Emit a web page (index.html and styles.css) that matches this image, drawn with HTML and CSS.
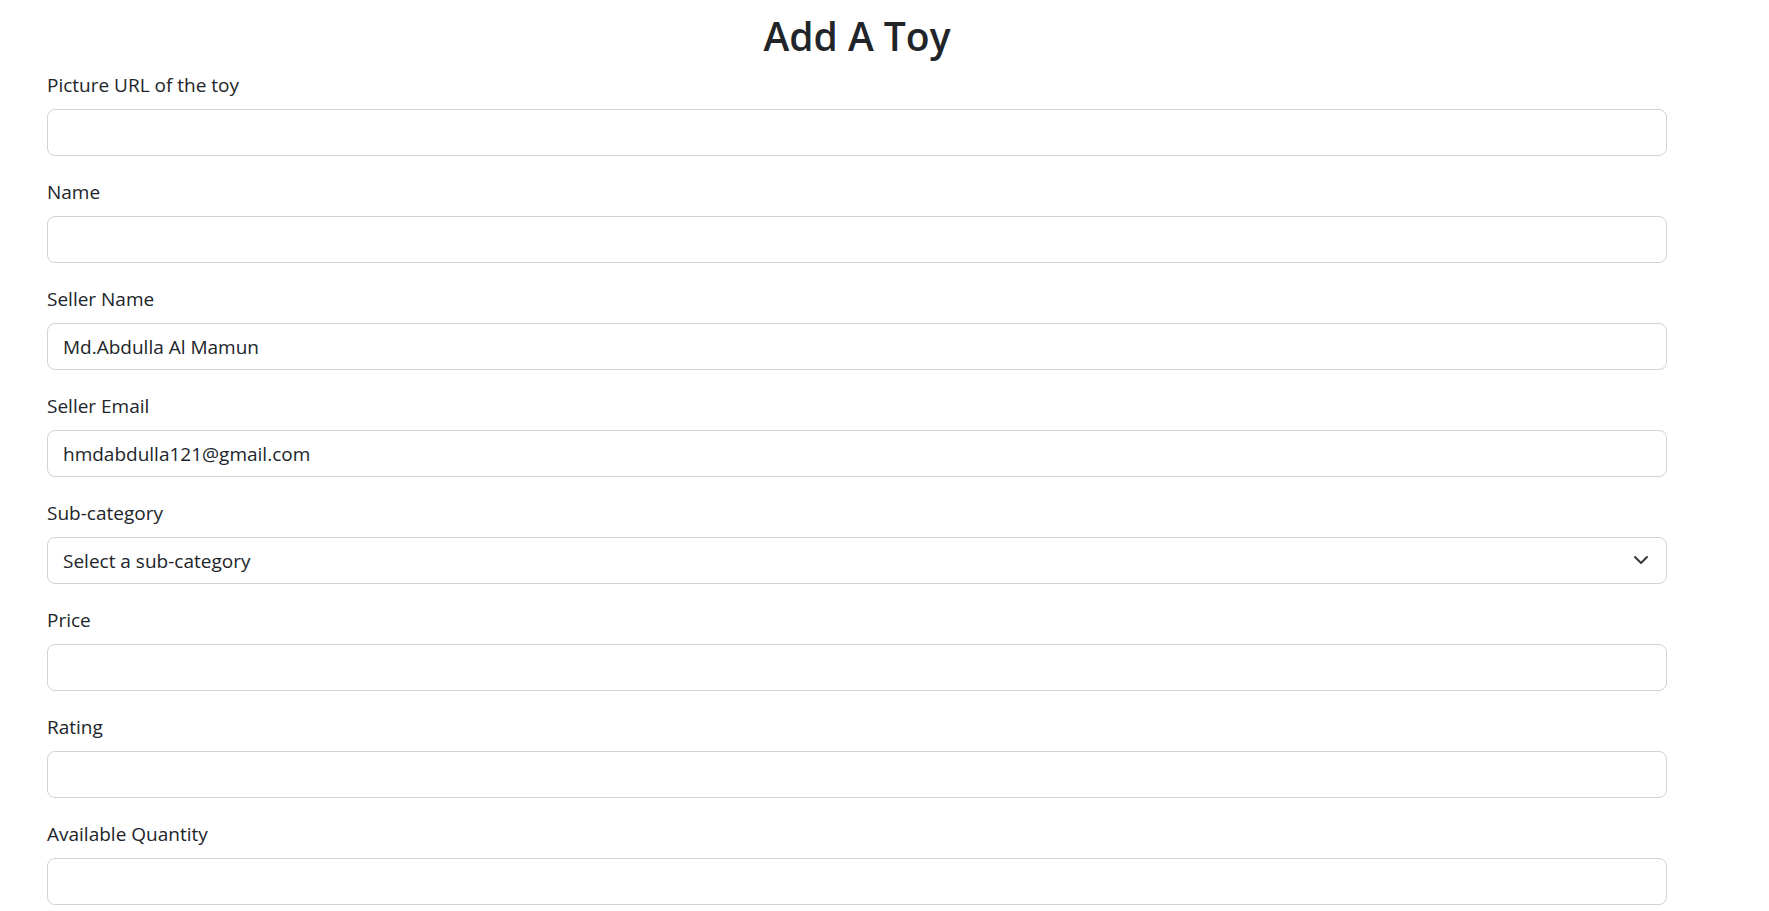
FILE: index.html
```html
<!DOCTYPE html>
<html lang="en">
<head>
  <meta charset="utf-8">
  <meta name="viewport" content="width=device-width, initial-scale=1">
  <title>Add A Toy</title>
  <link rel="stylesheet" href="styles.css">
</head>
<body>
  <main class="page">
    <h1 class="page-title">Add A Toy</h1>
    <form class="toy-form">
      <div class="field">
        <label class="field-label" for="picture">Picture URL of the toy</label>
        <input class="field-control" id="picture" type="text">
      </div>
      <div class="field">
        <label class="field-label" for="name">Name</label>
        <input class="field-control" id="name" type="text">
      </div>
      <div class="field">
        <label class="field-label" for="seller-name">Seller Name</label>
        <input class="field-control" id="seller-name" type="text" value="Md.Abdulla Al Mamun">
      </div>
      <div class="field">
        <label class="field-label" for="seller-email">Seller Email</label>
        <input class="field-control" id="seller-email" type="email" value="hmdabdulla121@gmail.com">
      </div>
      <div class="field">
        <label class="field-label" for="category">Sub-category</label>
        <div class="select-wrap">
          <select class="field-control field-select" id="category">
            <option>Select a sub-category</option>
          </select>
          <svg class="select-arrow" viewBox="0 0 16 16" aria-hidden="true"><path d="m2 5 6 6 6-6"/></svg>
        </div>
      </div>
      <div class="field">
        <label class="field-label" for="price">Price</label>
        <input class="field-control" id="price" type="text">
      </div>
      <div class="field">
        <label class="field-label" for="rating">Rating</label>
        <input class="field-control" id="rating" type="text">
      </div>
      <div class="field">
        <label class="field-label" for="quantity">Available Quantity</label>
        <input class="field-control" id="quantity" type="text">
      </div>
    </form>
  </main>
</body>
</html>
```

FILE: styles.css
```css
*,
*::before,
*::after {
  box-sizing: border-box;
}

body {
  margin: 0;
  background: #fff;
  color: #212529;
  font-family: "Segoe UI", "Open Sans", "Noto Sans", sans-serif;
  font-size: 19px;
  line-height: 30px;
}

.page {
  padding: 12px 102px 0 47px;
}

.page-title {
  margin: 0 0 10px;
  font-size: 39px;
  font-weight: 600;
  line-height: 48px;
  text-align: center;
}

.toy-form {
  display: flex;
  flex-direction: column;
  gap: 21px;
}

.field {
  display: flex;
  flex-direction: column;
  gap: 9px;
}

.field-label {
  align-self: flex-start;
}

.field-control {
  display: block;
  width: 100%;
  height: 47px;
  margin: 0;
  padding: 8px 15px;
  border: 1px solid #ced4da;
  border-radius: 8px;
  background: #fff;
  color: inherit;
  font: inherit;
  appearance: none;
}

.select-wrap {
  position: relative;
}

.field-select {
  padding-right: 45px;
}

.select-arrow {
  position: absolute;
  top: 15px;
  right: 18px;
  width: 16px;
  height: 16px;
  fill: none;
  stroke: #343a40;
  stroke-width: 2;
  stroke-linecap: round;
  stroke-linejoin: round;
  pointer-events: none;
}
```
